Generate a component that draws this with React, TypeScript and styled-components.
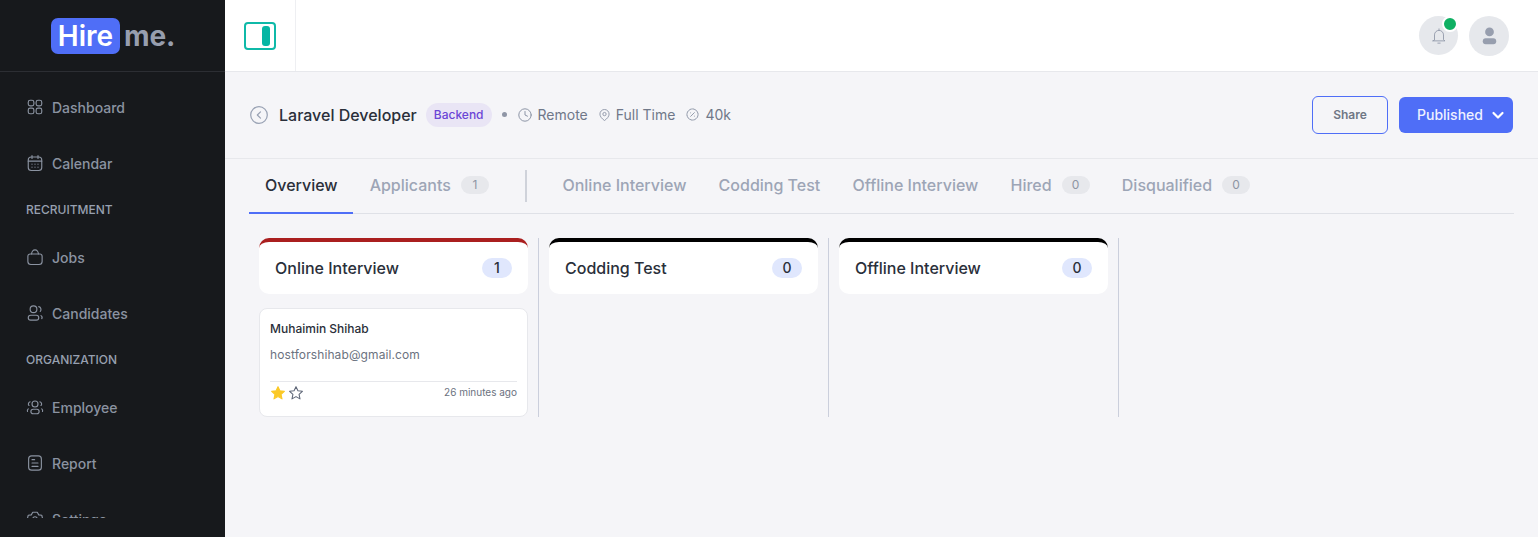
import React from "react";
import styled, { createGlobalStyle } from "styled-components";

const Global = createGlobalStyle`
  * { box-sizing: border-box; }
  html, body { margin: 0; height: 100%; overflow: hidden; }
  body { font-family: Inter, "Liberation Sans", sans-serif; background: #f5f5f8; }
`;
const Shell = styled.div`display: flex; width: 1538px; height: 537px; overflow: hidden;`;
const Sidebar = styled.aside`width: 225px; flex: none; background: #17191c; display: flex; flex-direction: column; height: 537px;`;
const LogoBar = styled.div`height: 72px; flex: none; border-bottom: 1px solid #2c2e33; display: flex; align-items: center; padding-left: 51px;`;
const LogoBadge = styled.span`width: 69px; height: 36px; border-radius: 7px; background: #4f6ef7; color: #fff; font-size: 28px; font-weight: 600; line-height: 36px; text-align: center;`;
const LogoRest = styled.span`margin-left: 4px; color: #979eae; font-size: 28px; font-weight: 700; letter-spacing: -0.1px;`;
const Nav = styled.nav`height: 446px; flex: none; overflow: hidden; padding-top: 7px;`;
const NavItem = styled.a`height: 56px; display: flex; align-items: center; gap: 8px; padding-left: 26px; color: #8b93a1; font-size: 14px; font-weight: 500;
  svg { width: 18px; height: 18px; flex: none; }`;
const NavLabel = styled.div`height: 38px; padding: 11px 0 0 26px; color: #97a0b0; font-size: 12px; font-weight: 500; line-height: 15px;`;
const Main = styled.main`flex: 1; min-width: 0; display: flex; flex-direction: column;`;
const TopBar = styled.header`height: 72px; flex: none; background: #fff; border-bottom: 1px solid #e7e8ec; display: flex; align-items: center; justify-content: space-between; padding-right: 29px;`;
const ToggleCell = styled.div`width: 71px; height: 71px; border-right: 1px solid #eeeff2; display: flex; align-items: center; justify-content: center;`;
const ToggleFrame = styled.button`width: 32px; height: 28px; padding: 0 4px 0 0; border: 2px solid #0fb9a8; border-radius: 4px; background: #fff; display: flex; align-items: center; justify-content: flex-end;`;
const ToggleBar = styled.span`width: 8px; height: 20px; border-radius: 3px; background: #06b6a4;`;
const TopActions = styled.div`display: flex; align-items: center; gap: 11px;`;
const RoundBtn = styled.div<{ $size: number }>`position: relative; width: ${p => p.$size}px; height: ${p => p.$size}px; border-radius: 50%; background: #e6e8ec; display: flex; align-items: center; justify-content: center;`;
const Dot = styled.span`position: absolute; top: 0; left: 23px; width: 16px; height: 16px; border-radius: 50%; background: #0fb063; border: 2.5px solid #fff;`;
const JobHead = styled.section`height: 87px; flex: none; border-bottom: 1px solid #e7e8ec; display: flex; align-items: center; justify-content: space-between; padding: 0 25px 0 25px;`;
const JobLeft = styled.div`display: flex; align-items: center; margin-top: -1px;`;
const JobTitle = styled.h1`margin: 0 0 0 11px; font-size: 16px; line-height: 20px; font-weight: 500; color: #2a2f3a;`;
const Tag = styled.span`margin-left: 9px; height: 24px; padding: 0 8px; border-radius: 12px; background: #e9e5f5; color: #6b45d6; font-size: 12px; font-weight: 500; line-height: 24px;`;
const Bullet = styled.span`width: 5px; height: 5px; margin: 0 11px 0 10px; border-radius: 50%; background: #8f96a6;`;
const Meta = styled.span`display: flex; align-items: center; gap: 6px; margin-right: 11px; color: #707889; font-size: 14px;
  svg { flex: none; }`;
const JobRight = styled.div`display: flex; align-items: center; gap: 11px; margin-top: -1px;`;
const ShareBtn = styled.button`width: 76px; height: 38px; border: 1px solid #4f6ef7; border-radius: 6px; background: transparent; color: #6f7785; font: 600 12px Inter, sans-serif;`;
const PublishBtn = styled.button`width: 114px; height: 36px; border: none; border-radius: 6px; background: #4f6ef7; color: #eef1ff; font: 500 14px Inter, sans-serif; display: flex; align-items: center; padding: 0 8px 0 18px; justify-content: space-between;`;
const Tabs = styled.div`height: 55px; flex: none; margin: 0 24px; border-bottom: 1px solid #dfe1e7; display: flex;`;
const Tab = styled.div<{ $active?: boolean }>`height: 55px; margin-right: ${p => (p.$active ? 17 : 32.2)}px; padding: 0 ${p => (p.$active ? "15px" : "0")} 2px ${p => (p.$active ? "16px" : "0")}; display: flex; align-items: center; gap: 10px; font-size: 16px; font-weight: 500; color: ${p => (p.$active ? "#2a2f3a" : "#9da5b6")}; border-bottom: 2px solid ${p => (p.$active ? "#4f6ef7" : "transparent")};`;
const TabCount = styled.span`width: 28px; height: 18px; border-radius: 9px; background: #e7e8ec; color: #8d94a3; font-size: 12px; font-weight: 400; line-height: 18px; text-align: center;`;
const TabRule = styled.span`width: 2px; height: 32px; align-self: center; background: #cfd2da; margin: 0 35.4px 0 4px;`;
const Board = styled.div`display: flex; padding: 24px 0 0 34px; align-items: flex-start;`;
const Column = styled.section`width: 280px; height: 179px; padding-right: 10px; border-right: 1px solid #cbcfdc; flex: none; & + & { width: 290px; padding-left: 10px; }`;
const ColHead = styled.header<{ $accent: string }>`height: 56px; border-radius: 10px; background: #fff; border-top: 4px solid ${p => p.$accent}; display: flex; align-items: center; justify-content: space-between; padding: 0 16px; margin-bottom: 14px;`;
const ColTitle = styled.h2`margin: 0; font-size: 16px; font-weight: 500; color: #2a2f3a;`;
const ColCount = styled.span`width: 30px; height: 20px; border-radius: 10px; background: #e0e7fd; color: #2a2f3a; font-size: 14px; font-weight: 500; line-height: 20px; text-align: center;`;
const Card = styled.article`height: 109px; background: #fff; border: 1px solid #e7e8ec; border-radius: 8px; padding: 11px 10px 10px; display: flex; flex-direction: column;`;
const CardName = styled.div`font-size: 12px; line-height: 18px; font-weight: 500; color: #2a2f3a;`;
const CardMail = styled.div`margin-top: 8px; font-size: 12px; line-height: 18px; letter-spacing: 0.1px; color: #6b7280;`;
const CardFoot = styled.footer`margin-top: 17px; border-top: 1px solid #e7e8ec; padding-top: 3px; display: flex; align-items: center; justify-content: space-between;`;
const Stars = styled.div`display: flex; gap: 2px;`;
const Time = styled.span`font-size: 10px; color: #6b7280; margin-top: -2px;`;

const I = ({ children, size = 18 }: { children: React.ReactNode; size?: number }) => (
  <svg viewBox="0 0 24 24" width={size} height={size} fill="none" stroke="currentColor" strokeWidth={1.5} strokeLinecap="round" strokeLinejoin="round">{children}</svg>
);
const Star = ({ on }: { on?: boolean }) => (
  <svg viewBox="0 0 24 24" width="16" height="16" fill={on ? "#fbc927" : "none"} stroke={on ? "#fbc927" : "#5f6778"} strokeWidth="1.6" strokeLinejoin="round">
    <path d="M12 2.5l2.9 6.2 6.7.8-5 4.6 1.4 6.7-6-3.4-6 3.4 1.4-6.7-5-4.6 6.7-.8z" />
  </svg>
);

const cols = [
  { title: "Online Interview", n: 1, accent: "#aa1f1f" },
  { title: "Codding Test", n: 0, accent: "#000" },
  { title: "Offline Interview", n: 0, accent: "#000" },
];

export default function App() {
  return (
    <Shell>
      <Global />
      <Sidebar>
        <LogoBar><LogoBadge>Hire</LogoBadge><LogoRest>me.</LogoRest></LogoBar>
        <Nav>
          <NavItem><I><rect x="3" y="3" width="7.5" height="7.5" rx="2.5" /><rect x="13.5" y="3" width="7.5" height="7.5" rx="2.5" /><rect x="3" y="13.5" width="7.5" height="7.5" rx="2.5" /><rect x="13.5" y="13.5" width="7.5" height="7.5" rx="2.5" /></I>Dashboard</NavItem>
          <NavItem><I><rect x="3" y="4" width="18" height="18" rx="4" /><path d="M3 9.5h18M8 2v4M16 2v4M8 13.5h.01M12 13.5h.01M16 13.5h.01M8 17.5h.01M12 17.5h.01M16 17.5h.01" /></I>Calendar</NavItem>
          <NavLabel>RECRUITMENT</NavLabel>
          <NavItem><I><path d="M5.5 8h13a3 3 0 0 1 3 3v7a4 4 0 0 1-4 4h-11a4 4 0 0 1-4-4v-7a3 3 0 0 1 3-3z" /><path d="M7.5 8a4.5 5.5 0 0 1 9 0" /></I>Jobs</NavItem>
          <NavItem><I><circle cx="10" cy="7" r="4.5" /><rect x="3" y="15" width="14" height="6.5" rx="3.25" /><path d="M17 3.5a4 4 0 0 1 2 6.5M20 15.5a3 3 0 0 1 1 4" /></I>Candidates</NavItem>
          <NavLabel>ORGANIZATION</NavLabel>
          <NavItem><I><circle cx="12" cy="8" r="4" /><rect x="6.5" y="15" width="11" height="6" rx="3" /><path d="M5.5 5a3 3 0 0 0-1.5 5M18.5 5a3 3 0 0 1 1.5 5M3 14.5a3 3 0 0 0-1 3.5M21 14.5a3 3 0 0 1 1 3.5" /></I>Employee</NavItem>
          <NavItem><I><rect x="3.5" y="2.5" width="17" height="19" rx="4" /><path d="M8 7.5h3.5M8 12h8M8 16.5h8" /></I>Report</NavItem>
          <NavItem><I><path d="M9 3h6l2 3.5 4 .5 1 4-2.5 3 .5 4-3.5 2.5H7.5L4 17.5l.5-4L2 11l1-4 4-.5z" /><circle cx="12" cy="12" r="3" /></I>Settings</NavItem>
        </Nav>
      </Sidebar>
      <Main>
        <TopBar>
          <ToggleCell><ToggleFrame aria-label="Toggle sidebar"><ToggleBar /></ToggleFrame></ToggleCell>
          <TopActions>
            <RoundBtn $size={39}>
              <Dot />
              <svg viewBox="0 0 24 24" width="18" height="18" fill="none" stroke="#979eae" strokeWidth="1.3" strokeLinecap="round" strokeLinejoin="round"><path d="M6 17V10.5a6 6 0 0 1 12 0V17l2 1.5H4zM12 2.5v2M10.5 21.5h3" /></svg>
            </RoundBtn>
            <RoundBtn $size={40}>
              <svg viewBox="0 0 24 24" width="19" height="19" fill="#979eae"><circle cx="12" cy="7.5" r="5.5" /><rect x="3.5" y="15.5" width="17" height="7.5" rx="3.7" /></svg>
            </RoundBtn>
          </TopActions>
        </TopBar>
        <JobHead>
          <JobLeft>
            <svg viewBox="0 0 18 18" width="18" height="18" fill="none" stroke="#98a1b3" strokeWidth="1.2" strokeLinecap="round" strokeLinejoin="round"><circle cx="9" cy="9" r="8.3" /><path d="M10.5 5.8L7.3 9l3.2 3.2" /></svg>
            <JobTitle>Laravel Developer</JobTitle>
            <Tag>Backend</Tag>
            <Bullet />
            <Meta>
              <svg viewBox="0 0 14 14" width="14" height="14" fill="none" stroke="#8d95a6" strokeWidth="1" strokeLinecap="round"><circle cx="7" cy="7" r="6.2" /><path d="M7 3.5V7l2.5 1.2" /></svg>
              Remote
            </Meta>
            <Meta>
              <svg viewBox="0 0 12 14" width="11" height="14" fill="none" stroke="#8d95a6" strokeWidth="1"><path d="M6 13C3 11 1 8.5 1 6a5 5 0 0 1 10 0c0 2.5-2 5-5 7z" /><circle cx="6" cy="6" r="1.8" /></svg>
              Full Time
            </Meta>
            <Meta>
              <svg viewBox="0 0 14 14" width="13" height="13" fill="none" stroke="#8d95a6" strokeWidth="1" strokeLinecap="round"><circle cx="7" cy="7" r="6" strokeDasharray="3 .6" /><path d="M5 9l4-4M5 5.2h.01M9 8.8h.01" /></svg>
              40k
            </Meta>
          </JobLeft>
          <JobRight>
            <ShareBtn>Share</ShareBtn>
            <PublishBtn>Published
              <svg viewBox="0 0 14 14" width="14" height="14" fill="none" stroke="#fff" strokeWidth="2.2" strokeLinecap="round" strokeLinejoin="round"><path d="M2.5 5l4.5 4.5L11.5 5" /></svg>
            </PublishBtn>
          </JobRight>
        </JobHead>
        <Tabs>
          <Tab $active>Overview</Tab>
          <Tab>Applicants <TabCount>1</TabCount></Tab>
          <TabRule />
          <Tab>Online Interview</Tab>
          <Tab>Codding Test</Tab>
          <Tab>Offline Interview</Tab>
          <Tab>Hired <TabCount>0</TabCount></Tab>
          <Tab>Disqualified <TabCount>0</TabCount></Tab>
        </Tabs>
        <Board>
          {cols.map(c => (
            <Column key={c.title}>
              <ColHead $accent={c.accent}><ColTitle>{c.title}</ColTitle><ColCount>{c.n}</ColCount></ColHead>
              {c.n > 0 && (
                <Card>
                  <CardName>Muhaimin Shihab</CardName>
                  <CardMail>hostforshihab@gmail.com</CardMail>
                  <CardFoot>
                    <Stars><Star on /><Star /></Stars>
                    <Time>26 minutes ago</Time>
                  </CardFoot>
                </Card>
              )}
            </Column>
          ))}
        </Board>
      </Main>
    </Shell>
  );
}
